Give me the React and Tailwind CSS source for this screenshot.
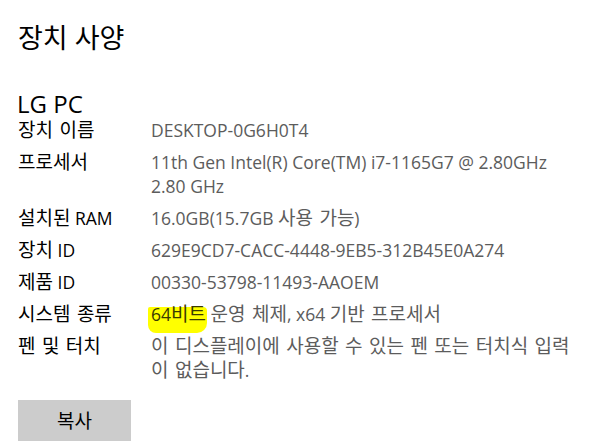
import React from "react";

const font = { fontFamily: '"Segoe UI", "Open Sans", "Noto Sans CJK KR", sans-serif' };

const K = ({ text }) =>
	text.split(/([가-힣]+(?:\s+[가-힣]+)*)/).map((part, i) =>
		/[가-힣]/.test(part) ? (
			<span key={i} className="text-[19px] [word-spacing:1.5px]">
				{part}
			</span>
		) : (
			part
		),
	);

const rows = [
	{ label: "장치 이름", value: ["DESKTOP-0G6H0T4"] },
	{ label: "프로세서", value: ["11th Gen Intel(R) Core(TM) i7-1165G7 @ 2.80GHz", "2.80 GHz"] },
	{ label: "설치된 RAM", value: ["16.0GB(15.7GB 사용 가능)"] },
	{ label: "장치 ID", value: ["629E9CD7-CACC-4448-9EB5-312B45E0A274"] },
	{ label: "제품 ID", value: ["00330-53798-11493-AAOEM"] },
	{ label: "시스템 종류", value: null },
	{ label: "펜 및 터치", value: ["이 디스플레이에 사용할 수 있는 펜 또는 터치식 입력", "이 없습니다."] },
];

export default function App() {
	return (
		<div className="w-[599px] h-[441px] overflow-hidden bg-white" style={font}>
			<div className="pl-[18px] pt-[18px]">
				<h1 className="text-[27px] leading-[40px] text-black">장치 사양</h1>
				<h2 className="mt-[32px] -ml-[1px] text-[24px] leading-[28px] text-black">LG PC</h2>
				<div className="flex flex-col gap-[8px] text-[17.5px] leading-[24px]">
					{rows.map((r) => (
						<div key={r.label} className="flex">
							<div className="w-[133px] shrink-0 text-black">
								<K text={r.label} />
							</div>
							<div className="text-[#5c5c5c]">
								{r.value ? (
									r.value.map((line) => (
										<div key={line}>
											<K text={line} />
										</div>
									))
								) : (
									<div>
										<span className="relative">
											<span className="absolute -left-[3px] -right-[1px] top-[5px] bottom-[-7px] bg-[#ffff00] rounded-[2px_4px_10px_8px]"></span>
											<span className="relative text-[#3a3a00]">
												64<span className="text-[19px]">비트</span>
											</span>
										</span>{" "}
										<K text="운영 체제, x64 기반 프로세서" />
									</div>
								)}
							</div>
						</div>
					))}
				</div>
				<button className="mt-[18px] w-[113px] h-[42px] bg-[#cccccc] text-[19px] text-black flex items-center justify-center">
					복사
				</button>
			</div>
		</div>
	);
}
